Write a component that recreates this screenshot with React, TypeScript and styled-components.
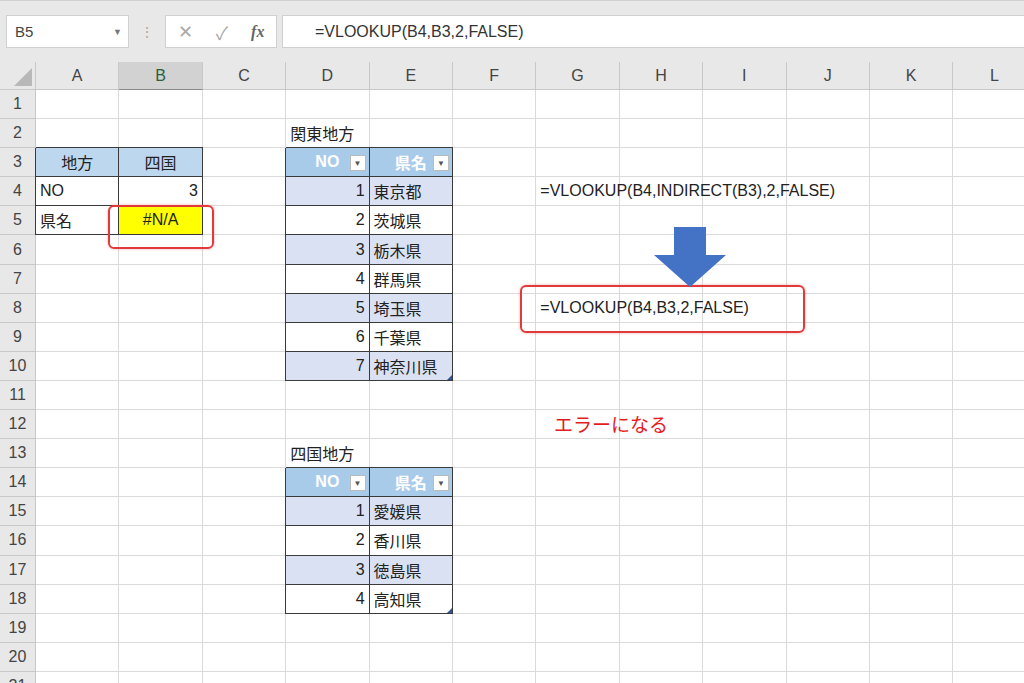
import React from "react";
import styled, { createGlobalStyle } from "styled-components";

const Global = createGlobalStyle`
  body { margin: 0; background: #fff; font-family: "Liberation Sans", "Noto Sans CJK JP", sans-serif; overflow: hidden; }
`;

const COLW = 83.4;
const ROWH = 29.1;
const COLS = ["A", "B", "C", "D", "E", "F", "G", "H", "I", "J", "K", "L"];

const Page = styled.div`width: 1024px; height: 683px; overflow: hidden; position: relative;`;
const Toolbar = styled.div`
  height: 62px; background: #e8e8e8; border-top: 1px solid #d0d0d0;
  box-sizing: border-box; display: flex; align-items: center; padding: 0 0 0 6px; gap: 0;
`;
const NameBox = styled.div`
  width: 123px; height: 33px; background: #fff; border: 1px solid #d0d0d0; box-sizing: border-box;
  display: flex; align-items: center; justify-content: space-between; padding: 0 6px 0 8px;
  font-size: 15px; color: #444;
`;
const Caret = styled.span`font-size: 9px; color: #777;`;
const Dots = styled.div`width: 36px; text-align: center; color: #aaa; font-size: 14px;`;
const IconBox = styled.div`
  width: 112px; height: 33px; background: #fff; border: 1px solid #d0d0d0; box-sizing: border-box;
  display: flex; align-items: center; justify-content: space-around; color: #aaa; font-size: 18px;
`;
const Fx = styled.span`font-family: "Liberation Serif", serif; font-style: italic; font-weight: bold; color: #666; font-size: 16px;`;
const FormulaInput = styled.div`
  flex: 1; height: 33px; margin-left: 5px; background: #fff; border: 1px solid #d0d0d0; border-right: none;
  box-sizing: border-box; display: flex; align-items: center; padding-left: 32px; font-size: 16px; color: #333;
`;

const Sheet = styled.div`
  display: grid;
  grid-template-columns: 36px repeat(12, ${COLW}px);
  grid-template-rows: 28px repeat(21, ${ROWH}px);
  font-size: 16px;
`;
const Corner = styled.div`
  background: #e8e8e8; border-right: 1px solid #c8c8c8; border-bottom: 1px solid #c8c8c8; box-sizing: border-box;
  position: relative;
  &::after { content: ""; position: absolute; right: 3px; bottom: 3px; border-left: 18px solid transparent; border-bottom: 18px solid #b8b8b8; }
`;
const ColHead = styled.div<{ $sel?: boolean }>`
  background: ${p => (p.$sel ? "#d2d2d2" : "#e8e8e8")}; color: ${p => (p.$sel ? "#2b5e3b" : "#444")};
  border-right: 1px solid #c8c8c8; border-bottom: 1px solid ${p => (p.$sel ? "#8a8a8a" : "#c8c8c8")};
  box-sizing: border-box; display: flex; align-items: center; justify-content: center; font-size: 16px;
`;
const RowHead = styled.div`
  background: #e8e8e8; color: #444; border-right: 1px solid #c8c8c8; border-bottom: 1px solid #c8c8c8;
  box-sizing: border-box; display: flex; align-items: center; justify-content: center; font-size: 16px;
`;
const Cell = styled.div<{ $bg?: string; $align?: string; $box?: boolean; $color?: string; $bold?: boolean }>`
  background: ${p => p.$bg || "#fff"}; color: ${p => p.$color || "#222"};
  font-weight: ${p => (p.$bold ? "bold" : "normal")};
  border-right: 1px solid ${p => (p.$box ? "#3a3a3a" : "#dadada")};
  border-bottom: 1px solid ${p => (p.$box ? "#3a3a3a" : "#dadada")};
  ${p => (p.$box ? "box-shadow: -1px 0 0 #3a3a3a, 0 -1px 0 #3a3a3a; z-index: 1;" : "")}
  box-sizing: border-box; display: flex; align-items: center; justify-content: ${p => p.$align || "flex-start"};
  padding: 0 4px; white-space: nowrap; position: relative; overflow: visible;
`;
const Filter = styled.span`
  position: absolute; right: 3px; top: 7px; width: 16px; height: 16px; background: #fff; border: 1px solid #bbb;
  box-sizing: border-box; display: flex; align-items: center; justify-content: center; font-size: 8px; color: #555;
`;
const Overflow = styled.span`position: absolute; left: 4px; z-index: 3;`;
const RedBox = styled.div`
  position: absolute; border: 2px solid #e03a3a; border-radius: 6px; box-shadow: 0 0 3px rgba(224,58,58,0.4); z-index: 4;
`;
const RedText = styled.div`position: absolute; left: 554px; top: 410px; color: #e51c1c; font-size: 19px; z-index: 4;`;
const Arrow = styled.svg`position: absolute; left: 654px; top: 227px; z-index: 4;`;
const Corner2 = styled.span`position: absolute; right: 0; bottom: 0; border-left: 5px solid transparent; border-bottom: 5px solid #2f5597;`;

type C = { t?: string; bg?: string; align?: string; box?: boolean; color?: string; bold?: boolean; filter?: boolean; over?: boolean; mark?: boolean };
const cells: Record<string, C> = {};
const HB = "#bdd7ee", TH = "#a9cbea", BAND = "#d9e1f2";
cells["A3"] = { t: "地方", bg: HB, align: "center", box: true };
cells["B3"] = { t: "四国", bg: HB, align: "center", box: true };
cells["A4"] = { t: "NO", box: true };
cells["B4"] = { t: "3", align: "flex-end", box: true };
cells["A5"] = { t: "県名", box: true };
cells["B5"] = { t: "#N/A", bg: "#ffff00", align: "center", box: true };
cells["D2"] = { t: "関東地方", over: true };
cells["D13"] = { t: "四国地方", over: true };
const tbl = (start: number, names: string[]) => {
  cells["D" + start] = { t: "NO", bg: TH, align: "center", box: true, color: "#fff", bold: true, filter: true };
  cells["E" + start] = { t: "県名", bg: TH, align: "center", box: true, color: "#fff", bold: true, filter: true };
  names.forEach((n, i) => {
    const bg = i % 2 === 0 ? BAND : "#fff";
    cells["D" + (start + 1 + i)] = { t: String(i + 1), bg, align: "flex-end", box: true };
    cells["E" + (start + 1 + i)] = { t: n, bg, box: true, mark: i === names.length - 1 };
  });
};
tbl(3, ["東京都", "茨城県", "栃木県", "群馬県", "埼玉県", "千葉県", "神奈川県"]);
tbl(14, ["愛媛県", "香川県", "徳島県", "高知県"]);
cells["G4"] = { t: "=VLOOKUP(B4,INDIRECT(B3),2,FALSE)", over: true };
cells["G8"] = { t: "=VLOOKUP(B4,B3,2,FALSE)", over: true };

export default function App() {
  const grid: React.ReactNode[] = [<Corner key="c" />];
  COLS.forEach(c => grid.push(<ColHead key={c} $sel={c === "B"}>{c}</ColHead>));
  for (let r = 1; r <= 21; r++) {
    grid.push(<RowHead key={"r" + r}>{r}</RowHead>);
    COLS.forEach(c => {
      const d = cells[c + r];
      grid.push(
        <Cell key={c + r} $bg={d?.bg} $align={d?.align} $box={d?.box} $color={d?.color} $bold={d?.bold}>
          {d?.over ? <Overflow>{d.t}</Overflow> : d?.t}
          {d?.filter && <Filter>▼</Filter>}
          {d?.mark && <Corner2 />}
        </Cell>
      );
    });
  }
  return (
    <Page>
      <Global />
      <Toolbar>
        <NameBox>B5<Caret>▼</Caret></NameBox>
        <Dots>⋮</Dots>
        <IconBox><span>✕</span><span>✓</span><Fx>fx</Fx></IconBox>
        <FormulaInput>=VLOOKUP(B4,B3,2,FALSE)</FormulaInput>
      </Toolbar>
      <Sheet>{grid}</Sheet>
      <RedBox style={{ left: 108, top: 205, width: 102, height: 40 }} />
      <RedBox style={{ left: 520, top: 285, width: 281, height: 44 }} />
      <Arrow width="72" height="60" viewBox="0 0 72 60">
        <polygon points="20,0 52,0 52,28 72,28 36,60 0,28 20,28" fill="#4472c4" />
      </Arrow>
      <RedText>エラーになる</RedText>
    </Page>
  );
}
